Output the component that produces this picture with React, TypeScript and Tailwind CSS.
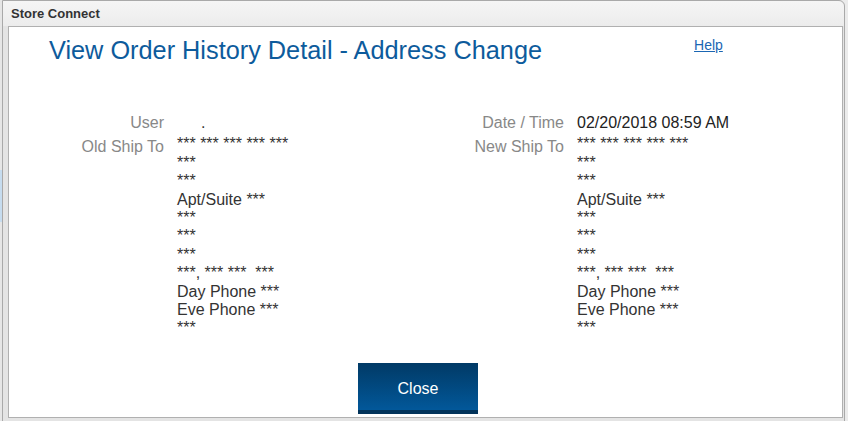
import React from "react";

const oldLines = [
  "*** *** *** *** ***",
  "***",
  "***",
  "Apt/Suite ***",
  "***",
  "***",
  "***",
  "***,\u00a0*** ***\u00a0\u00a0***",
  "Day Phone ***",
  "Eve Phone ***",
  "***",
];

function Lines({ lines }: { lines: string[] }) {
  return (
    <div className="flex flex-col">
      {lines.map((l, i) => (
        <div key={i} className="h-[18.4px] leading-[18.4px] whitespace-pre">
          {l}
        </div>
      ))}
    </div>
  );
}

export default function App() {
  return (
    <div
      className="w-[848px] h-[421px] overflow-hidden flex bg-[#ebebeb] relative"
      style={{ fontFamily: '"Liberation Sans", Arial, sans-serif' }}
    >
      {/* background page bits on left */}
      <div className="w-[2px] h-full flex flex-col shrink-0 bg-[#e6e6e6]">
        <div className="h-[170px]" />
        <div className="h-[52px] bg-[#c6dcef]" />
      </div>
      <div className="w-[843px] h-[423px] shrink-0 border border-[#a9a9a9] rounded-tr-[6px] bg-[#e4e4e4] flex flex-col">
        <div className="h-[25px] bg-gradient-to-b from-[#f5f5f5] to-[#ececec] rounded-tr-[6px] flex items-center pl-[8px] text-[13px] font-bold text-[#333]">
          Store Connect
        </div>
        <div className="ml-[5px] mr-px h-[392px] bg-white border border-[#b0b0b0] flex flex-col">
          <div className="flex items-start h-[60px]">
            <div className="ml-[40px] mt-[9px] text-[25.3px] leading-[28px] text-[#0d5b9c]">
              View Order History Detail - Address Change
            </div>
            <a className="ml-[152px] mt-[10px] text-[14px] leading-[16px] text-[#1a66b3] underline cursor-pointer">
              Help
            </a>
          </div>
          <div className="mt-[27px] flex text-[16px] leading-[18.4px]">
            <div className="w-[400px] grid grid-cols-[155px_1fr] gap-x-[13px] gap-y-[3px]">
              <div className="text-right text-[#888]">User</div>
              <div className="text-[#333] pl-[24px]">.</div>
              <div className="text-right text-[#888] pt-[3px]">Old Ship To</div>
              <div className="text-[#333]">
                <Lines lines={oldLines} />
              </div>
            </div>
            <div className="grid grid-cols-[155px_1fr] gap-x-[13px] gap-y-[3px]">
              <div className="text-right text-[#888]">Date / Time</div>
              <div className="text-[#222]">02/20/2018 08:59 AM</div>
              <div className="text-right text-[#888] pt-[3px]">New Ship To</div>
              <div className="text-[#333]">
                <Lines lines={oldLines} />
              </div>
            </div>
          </div>
          <div className="mt-[25px] ml-[349px]">
            <button className="w-[120px] h-[51px] flex flex-col text-white text-[16px]">
              <div className="flex-1 flex items-center justify-center pt-[6px] bg-gradient-to-b from-[#013a66] to-[#02589a]">
                Close
              </div>
              <div className="h-[4px] bg-[#02335a]" />
            </button>
          </div>
        </div>
      </div>
    </div>
  );
}
